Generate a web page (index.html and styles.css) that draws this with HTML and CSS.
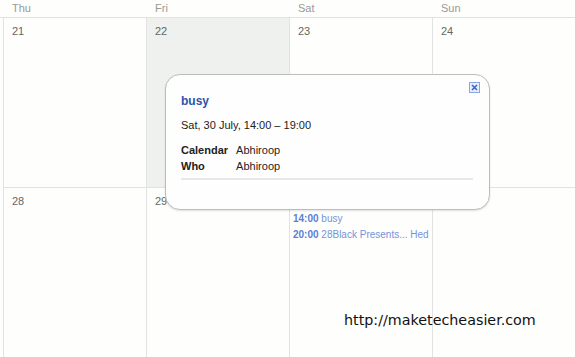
FILE: index.html
```html
<!doctype html>
<html lang="en">
<head>
  <meta charset="UTF-8">
  <title>Calendar week</title>
  <link rel="stylesheet" href="styles.css">
</head>
<body>
  <div id="calendar">
    <div class="days">
      <div class="dayname">Thu</div>
      <div class="dayname">Fri</div>
      <div class="dayname">Sat</div>
      <div class="dayname">Sun</div>
    </div>
    <div class="week">
      <div class="cell"><span class="num">21</span></div>
      <div class="cell today"><span class="num">22</span></div>
      <div class="cell"><span class="num">23</span></div>
      <div class="cell"><span class="num">24</span></div>
    </div>
    <div class="week">
      <div class="cell"><span class="num">28</span></div>
      <div class="cell"><span class="num">29</span></div>
      <div class="cell">
        <span class="num">30</span>
        <ul class="events">
          <li><b>14:00</b> busy</li>
          <li><b>20:00</b> 28Black Presents... Hed</li>
        </ul>
      </div>
      <div class="cell"><span class="num">31</span></div>
    </div>
  </div>

  <div id="bubble">
    <a href="#" class="close">
      <svg width="11" height="11" viewBox="0 0 11 11">
        <rect x="0.5" y="0.5" width="10" height="10" fill="#e8eefb" stroke="#8aa5e3"/>
        <path d="M3 3 L8 8 M8 3 L3 8" stroke="#3d66c9" stroke-width="1.6"/>
      </svg>
    </a>
    <h3>busy</h3>
    <p class="when">Sat, 30 July, 14:00 – 19:00</p>
    <table class="details">
      <tr><th>Calendar</th><td>Abhiroop</td></tr>
      <tr><th>Who</th><td>Abhiroop</td></tr>
    </table>
    <hr>
  </div>

  <div id="watermark">http://maketecheasier.com</div>
</body>
</html>
```

FILE: styles.css
```css
body { margin: 0; background: #fefefc; font-family: "Liberation Sans", Arial, sans-serif; font-size: 11px; color: #666; width: 575px; height: 357px; overflow: hidden; position: relative; }

#calendar { padding-left: 3px; }
.days { display: grid; grid-template-columns: repeat(4, 143px); height: 17px; border-bottom: 1px solid #e2e2e2; margin-left: -3px; padding-left: 3px; }
.dayname { padding: 2px 0 0 9px; color: #999; line-height: 13px; }

.week { display: grid; grid-template-columns: repeat(4, 143px); height: 169px; border-bottom: 1px solid #e2e2e2; }
.week:last-child { border-bottom: 0; }
.cell { border-left: 1px solid #e2e2e2; padding: 7px 8px 0 8px; overflow: hidden; }
.cell.today { background: #eff1ee; }
.num { display: block; line-height: 13px; color: #666; }

.events { list-style: none; margin: 3px -6px 0 -5px; padding: 0; color: #7593db; font-size: 10px; }
.events li { line-height: 16px; white-space: nowrap; }
.events b { color: #5a7fd6; }

#bubble {
  position: absolute; left: 165px; top: 74px; width: 292px; height: 104px;
  padding: 19px 16px 11px 15px;
  background: #fefefe; border: 1px solid #bdbdbd; border-radius: 15px;
  box-shadow: 0 1px 2px rgba(0,0,0,0.12);
  color: #222; font-size: 11px;
}
#bubble .close { position: absolute; right: 9px; top: 7px; line-height: 0; }
#bubble h3 { margin: 0; font-size: 12px; color: #2d54a8; line-height: 14px; }
#bubble .when { margin: 10px 0 0 0; line-height: 14px; }
.details { border-collapse: collapse; margin-top: 10px; }
.details th { text-align: left; padding: 0 8px 0 0; line-height: 16px; font-weight: bold; }
.details td { padding: 0; line-height: 16px; }
#bubble hr { border: 0; border-top: 2px solid #e8e8e8; margin: 4px 0 0 0; }

#watermark { position: absolute; left: 344px; top: 312px; font-family: "DejaVu Sans", sans-serif; font-size: 14.3px; color: #111; }
```
